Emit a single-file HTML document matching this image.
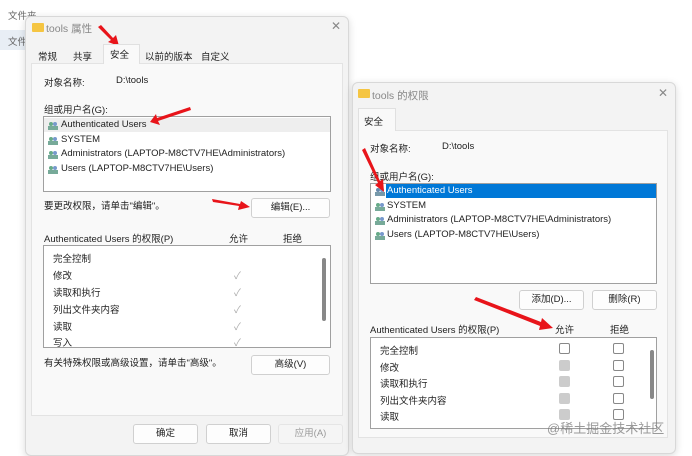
<!DOCTYPE html><html><head><meta charset="utf-8"><style>
*{margin:0;padding:0;box-sizing:border-box}
body{width:692px;height:448px;overflow:hidden;background:#fff;position:relative;font-family:"Liberation Sans","Noto Sans CJK SC",sans-serif;font-size:9.5px;color:#222}
.a{position:absolute;white-space:nowrap}
.win{position:absolute;background:#f3f3f3;border:1px solid #d8d8d8;border-radius:6px;box-shadow:0 2px 8px rgba(0,0,0,.15)}
.panel{position:absolute;background:#f9f9f9;border:1px solid #e3e3e3}
.lb{position:absolute;background:#fff;border:1px solid #a0a0a0}
.btn{position:absolute;background:#fdfdfd;border:1px solid #d0d0d0;border-radius:3px;text-align:center;line-height:18px}
.ic{position:absolute;width:10px;height:9px}
.cb{position:absolute;width:11px;height:11px;border:1px solid #888;border-radius:2px;background:#fff}
.cbd{position:absolute;width:11px;height:11px;border-radius:2px;background:#ccc}
.chk{position:absolute;color:#aaa;font-size:10px}
.fold{position:absolute;width:12px;height:9px;background:#f5c542;border-radius:1px}
</style></head><body>
<div class="a" style="left:8px;top:8px;color:#666">文件夹</div>
<div style="position:absolute;left:0;top:30px;width:25px;height:20px;background:#e8eef5"></div>
<div class="a" style="left:8px;top:34px;color:#666">文件</div>

<div class="win" style="left:25px;top:16px;width:324px;height:440px"></div>
<div class="fold" style="left:32px;top:23px"></div>
<div class="a" style="left:46px;top:21px;color:#888;font-size:10.5px">tools 属性</div>
<div class="a" style="left:331px;top:19px;color:#888;font-size:12px">✕</div>
<div class="a" style="left:38px;top:49px">常规</div>
<div class="a" style="left:73px;top:49px">共享</div>
<div style="position:absolute;left:103px;top:44px;width:37px;height:20px;background:#f9f9f9;border:1px solid #e0e0e0;border-bottom:none;z-index:2"></div>
<div class="a" style="left:110px;top:47px;z-index:3">安全</div>
<div class="a" style="left:145px;top:49px">以前的版本</div>
<div class="a" style="left:201px;top:49px">自定义</div>
<div class="panel" style="left:31px;top:63px;width:312px;height:353px"></div>
<div class="a" style="left:44px;top:75px">对象名称:</div>
<div class="a" style="left:116px;top:75px">D:\tools</div>
<div class="a" style="left:44px;top:102px">组或用户名(G):</div>
<div class="lb" style="left:43px;top:116px;width:288px;height:76px"></div>
<div style="position:absolute;left:44px;top:118px;width:286px;height:14px;background:#eee"></div>
<div class="a" style="left:61px;top:119px">Authenticated Users</div>
<div class="a" style="left:61px;top:134px">SYSTEM</div>
<div class="a" style="left:61px;top:148px">Administrators (LAPTOP-M8CTV7HE\Administrators)</div>
<div class="a" style="left:61px;top:163px">Users (LAPTOP-M8CTV7HE\Users)</div>
<svg class="ic" style="left:48px;top:121px"><circle cx="3" cy="3" r="2" fill="#6a8"/><circle cx="7" cy="3" r="2" fill="#79c"/><rect x="0" y="5" width="10" height="4" fill="#7a9"/></svg>
<svg class="ic" style="left:48px;top:136px"><circle cx="3" cy="3" r="2" fill="#6a8"/><circle cx="7" cy="3" r="2" fill="#79c"/><rect x="0" y="5" width="10" height="4" fill="#7a9"/></svg>
<svg class="ic" style="left:48px;top:150px"><circle cx="3" cy="3" r="2" fill="#6a8"/><circle cx="7" cy="3" r="2" fill="#79c"/><rect x="0" y="5" width="10" height="4" fill="#7a9"/></svg>
<svg class="ic" style="left:48px;top:165px"><circle cx="3" cy="3" r="2" fill="#6a8"/><circle cx="7" cy="3" r="2" fill="#79c"/><rect x="0" y="5" width="10" height="4" fill="#7a9"/></svg>
<div class="a" style="left:44px;top:198px">要更改权限，请单击"编辑"。</div>
<div class="btn" style="left:251px;top:198px;width:79px;height:20px">编辑(E)...</div>
<div class="a" style="left:44px;top:231px">Authenticated Users 的权限(P)</div>
<div class="a" style="left:229px;top:231px">允许</div>
<div class="a" style="left:283px;top:231px">拒绝</div>
<div class="lb" style="left:43px;top:245px;width:288px;height:103px;overflow:hidden"></div>
<div style="position:absolute;left:322px;top:258px;width:4px;height:63px;background:#888;border-radius:2px"></div>
<div class="a" style="left:53px;top:251px">完全控制</div>
<div class="a" style="left:53px;top:268px">修改</div>
<div class="a" style="left:53px;top:285px">读取和执行</div>
<div class="a" style="left:53px;top:302px">列出文件夹内容</div>
<div class="a" style="left:53px;top:319px">读取</div>
<div class="a" style="left:53px;top:335px">写入</div>
<div class="chk" style="left:234px;top:267px">✓</div>
<div class="chk" style="left:234px;top:284px">✓</div>
<div class="chk" style="left:234px;top:301px">✓</div>
<div class="chk" style="left:234px;top:318px">✓</div>
<div class="chk" style="left:234px;top:334px">✓</div>
<div class="a" style="left:44px;top:355px">有关特殊权限或高级设置，请单击"高级"。</div>
<div class="btn" style="left:251px;top:355px;width:79px;height:20px">高级(V)</div>
<div class="btn" style="left:133px;top:424px;width:65px;height:20px">确定</div>
<div class="btn" style="left:206px;top:424px;width:65px;height:20px">取消</div>
<div class="btn" style="left:278px;top:424px;width:65px;height:20px;color:#999;background:#f5f5f5;border-color:#e5e5e5">应用(A)</div>

<div class="win" style="left:352px;top:82px;width:324px;height:372px"></div>
<div class="fold" style="left:358px;top:89px"></div>
<div class="a" style="left:372px;top:88px;color:#888;font-size:10.5px">tools 的权限</div>
<div class="a" style="left:658px;top:86px;color:#888;font-size:12px">✕</div>
<div style="position:absolute;left:358px;top:108px;width:38px;height:23px;background:#f9f9f9;border:1px solid #e0e0e0;border-bottom:none;z-index:2"></div>
<div class="a" style="left:364px;top:114px;z-index:3">安全</div>
<div class="panel" style="left:358px;top:130px;width:310px;height:308px"></div>
<div class="a" style="left:370px;top:141px">对象名称:</div>
<div class="a" style="left:442px;top:141px">D:\tools</div>
<div class="a" style="left:370px;top:169px">组或用户名(G):</div>
<div class="lb" style="left:370px;top:183px;width:287px;height:101px"></div>
<div style="position:absolute;left:386px;top:184px;width:270px;height:14px;background:#0078d7"></div>
<div class="a" style="left:387px;top:185px;color:#fff">Authenticated Users</div>
<div class="a" style="left:387px;top:200px">SYSTEM</div>
<div class="a" style="left:387px;top:214px">Administrators (LAPTOP-M8CTV7HE\Administrators)</div>
<div class="a" style="left:387px;top:229px">Users (LAPTOP-M8CTV7HE\Users)</div>
<svg class="ic" style="left:375px;top:187px"><circle cx="3" cy="3" r="2" fill="#68a"/><circle cx="7" cy="3" r="2" fill="#79c"/><rect x="0" y="5" width="10" height="4" fill="#79a"/></svg>
<svg class="ic" style="left:375px;top:202px"><circle cx="3" cy="3" r="2" fill="#6a8"/><circle cx="7" cy="3" r="2" fill="#79c"/><rect x="0" y="5" width="10" height="4" fill="#7a9"/></svg>
<svg class="ic" style="left:375px;top:216px"><circle cx="3" cy="3" r="2" fill="#6a8"/><circle cx="7" cy="3" r="2" fill="#79c"/><rect x="0" y="5" width="10" height="4" fill="#7a9"/></svg>
<svg class="ic" style="left:375px;top:231px"><circle cx="3" cy="3" r="2" fill="#6a8"/><circle cx="7" cy="3" r="2" fill="#79c"/><rect x="0" y="5" width="10" height="4" fill="#7a9"/></svg>
<div class="btn" style="left:519px;top:290px;width:65px;height:20px">添加(D)...</div>
<div class="btn" style="left:592px;top:290px;width:65px;height:20px">删除(R)</div>
<div class="a" style="left:370px;top:322px">Authenticated Users 的权限(P)</div>
<div class="a" style="left:555px;top:322px">允许</div>
<div class="a" style="left:610px;top:322px">拒绝</div>
<div class="lb" style="left:370px;top:337px;width:287px;height:92px"></div>
<div style="position:absolute;left:650px;top:350px;width:4px;height:49px;background:#888;border-radius:2px"></div>
<div class="a" style="left:380px;top:343px">完全控制</div>
<div class="a" style="left:380px;top:360px">修改</div>
<div class="a" style="left:380px;top:376px">读取和执行</div>
<div class="a" style="left:380px;top:393px">列出文件夹内容</div>
<div class="a" style="left:380px;top:409px">读取</div>
<div class="cb" style="left:559px;top:343px"></div><div class="cb" style="left:613px;top:343px"></div>
<div class="cbd" style="left:559px;top:360px"></div><div class="cb" style="left:613px;top:360px"></div>
<div class="cbd" style="left:559px;top:376px"></div><div class="cb" style="left:613px;top:376px"></div>
<div class="cbd" style="left:559px;top:393px"></div><div class="cb" style="left:613px;top:393px"></div>
<div class="cbd" style="left:559px;top:409px"></div><div class="cb" style="left:613px;top:409px"></div>
<div class="a" style="left:547px;top:418px;font-size:13px;color:rgba(120,120,120,.75)">@稀土掘金技术社区</div>

<svg style="position:absolute;left:0;top:0" width="692" height="448">
<g fill="#e8141a">
<polygon points="98,27 101,25 113,38 116,35 119,46 108,42 111,40"/>
<polygon points="190,107 191,110 158,121 160,125 150,122 156,114 157,118"/>
<polygon points="212,199 213,202 239,206 238,210 250,207 241,201 240,204"/>
<polygon points="362,150 365,148 380,181 383,179 384,192 375,185 378,183"/>
<polygon points="474,300 476,297 541,322 542,318 553,328 539,330 540,326"/>
</g></svg>
</body></html>
